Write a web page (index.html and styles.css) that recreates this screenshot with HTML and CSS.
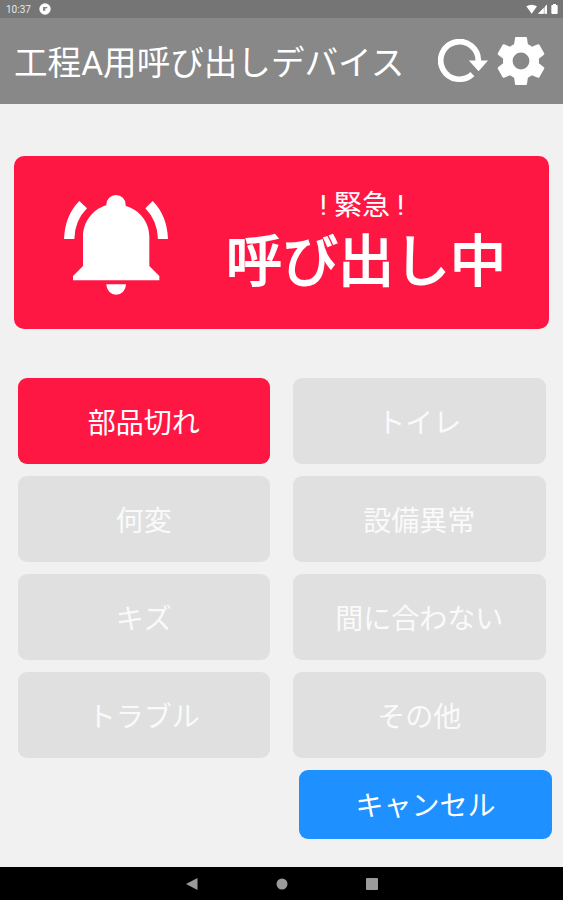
FILE: index.html
```html
<!DOCTYPE html>
<html lang="ja">
<head>
<meta charset="utf-8">
<title>工程A用呼び出しデバイス</title>
<link rel="stylesheet" href="styles.css">
</head>
<body>
<div class="screen">
  <div class="status">
    <span class="clock">10:37</span>
    <svg class="notice" viewBox="0 0 36 36"><circle cx="18" cy="18" r="17" fill="#fff"/><path d="M12 23V12H25V16H19V23Z" fill="#858585"/></svg>
    <svg class="signals" viewBox="378 11 96 33"><path d="M379 18Q395 8 411 18L395 40Z" fill="#fff"/><path d="M414 40L441 13V40Z" fill="#ccc"/><path d="M414 40L431 23V40ZM435 18L441 13V40H435Z" fill="#fff"/><path d="M454 16q0-2 2-2h3v-3h9v3h3q2 0 2 2v22q0 3-3 3h-13q-3 0-3-3Z" fill="#fff"/></svg>
  </div>
  <header class="header">
    <h1 class="title">工程A用呼び出しデバイス</h1>
    <svg class="refresh" viewBox="114 117 149 131"><path d="M216.500 221.500A56 56 0 1 1 234 183" fill="none" stroke="#fff" stroke-width="17"/><path d="M206 181H263L235 213Z" fill="#fff"/></svg>
    <svg class="gear" viewBox="2 2 20 20"><path fill="#fff" d="M19.430 12.980c.04-.32.07-.64.07-.98s-.03-.66-.07-.98l2.110-1.650c.19-.15.24-.42.12-.64l-2-3.460c-.12-.22-.39-.3-.61-.22l-2.490 1c-.52-.4-1.080-.73-1.690-.98l-.38-2.650C14.460 2.180 14.250 2 14 2h-4c-.25 0-.46.18-.49.42l-.38 2.650c-.61.25-1.170.59-1.690.98l-2.490-1c-.23-.09-.49 0-.61.22l-2 3.460c-.13.22-.07.49.12.64l2.110 1.650c-.04.32-.07.65-.07.98s.03.66.07.98l-2.110 1.650c-.19.15-.24.42-.12.64l2 3.460c.12.22.39.3.61.22l2.490-1c.52.4 1.080.73 1.690.98l.38 2.650c.03.24.24.42.49.42h4c.25 0 .46-.18.49-.42l.38-2.650c.61-.25 1.170-.59 1.690-.98l2.490 1c.23.09.49 0 .61-.22l2-3.460c.12-.22.07-.49-.12-.64l-2.110-1.650zM12 15.500a3.500 3.500 0 1 1 0-7a3.500 3.500 0 0 1 0 7z"/></svg>
  </header>
  <main class="content">
    <section class="banner">
      <svg class="bell" viewBox="191 165 312 300"><g fill="#fff"><path d="M318 196V194A29 29 0 0 1 376 194V198C417 209 447 246 447 290V378L477 408V421H218V408L248 378V290C248 246 277 208 318 196Z"/><path d="M318 433H377A29.500 31 0 0 1 318 433Z"/><path d="M237 183L260 205Q223 242 222 297H191Q194 226 237 183ZM457 183L435 205Q471 242 473 297H503Q500 226 457 183Z"/></g></svg>
      <div class="message">
        <p class="urgent">! 緊急 !</p>
        <p class="calling">呼び出し中</p>
      </div>
    </section>
    <section class="grid">
      <button class="btn active">部品切れ</button>
      <button class="btn">トイレ</button>
      <button class="btn">何変</button>
      <button class="btn">設備異常</button>
      <button class="btn">キズ</button>
      <button class="btn">間に合わない</button>
      <button class="btn">トラブル</button>
      <button class="btn">その他</button>
    </section>
    <button class="btn cancel">キャンセル</button>
  </main>
  <nav class="nav">
    <svg viewBox="0 0 12 12"><path d="M0 6L11.500 0V12Z"/></svg>
    <svg viewBox="0 0 12 12"><circle cx="6" cy="6" r="5.500"/></svg>
    <svg viewBox="0 0 12 12"><rect width="12" height="12" rx="1"/></svg>
  </nav>
</div>
</body>
</html>
```
FILE: styles.css
```css
* { box-sizing: border-box; }
body {
  margin: 0;
  font-family: Roboto, "Noto Sans CJK JP", sans-serif;
  color: #fff;
}
svg { display: block; flex: none; }
p, h1 { margin: 0; }
.screen {
  width: 563px;
  height: 900px;
  display: flex;
  flex-direction: column;
  background: #f1f1f1;
  overflow: hidden;
}
.status {
  height: 18px;
  background: #757575;
  display: flex;
  align-items: center;
  padding: 0 5px 0 6px;
}
.clock { width: 25px; font-size: 10px; line-height: 18px; padding-top: 1px; color: #e8e8e8; white-space: nowrap; }
.notice { width: 12px; height: 12px; margin-left: 8px; }
.signals { width: 32px; height: 11px; margin-left: auto; }
.header {
  height: 86px;
  background: #888;
  display: flex;
  align-items: center;
  padding: 0 18px 0 14px;
}
.title {
  flex: 1;
  padding-top: 5px;
  font-size: 33.6px;
  font-weight: 400;
  line-height: 50px;
  white-space: nowrap;
}
.refresh { width: 50px; height: 44px; margin-right: 9px; }
.gear { width: 48px; height: 48px; }
.content {
  flex: 1;
  display: flex;
  flex-direction: column;
  padding: 52px 14px 0;
}
.banner {
  height: 173px;
  display: flex;
  align-items: center;
  background: #ff1744;
  border-radius: 10px;
  padding: 0 42px 0 50px;
}
.bell { width: 104px; height: 100px; margin-top: 5px; }
.message { margin-left: auto; padding-top: 3px; width: 282px; text-align: center; white-space: nowrap; }
.urgent { font-size: 28px; line-height: 36px; margin-left: -8px; }
.calling { font-size: 56px; line-height: 76px; font-weight: 400; -webkit-text-stroke: 1.8px #fff; }
.grid {
  display: grid;
  grid-template-columns: 252.500px 252.500px;
  grid-auto-rows: 86px;
  gap: 12px 23px;
  margin: 49px 3.500px 0;
}
.btn {
  border: 0;
  padding: 0;
  border-radius: 9px;
  background: #e0e0e0;
  color: #fafafa;
  font: inherit;
  font-size: 28px;
  white-space: nowrap;
}
.active { background: #ff1744; color: #fff; }
.cancel {
  width: 253px;
  height: 69px;
  padding: 0 0 2px;
  margin: 12px -3px 0 auto;
  align-self: flex-end;
  background: #1e90ff;
  color: #fff;
}
.nav {
  height: 33px;
  background: #000;
  display: flex;
  justify-content: center;
  align-items: center;
  gap: 78px;
}
.nav svg { width: 12px; height: 12px; fill: #9b9b9b; }
```
